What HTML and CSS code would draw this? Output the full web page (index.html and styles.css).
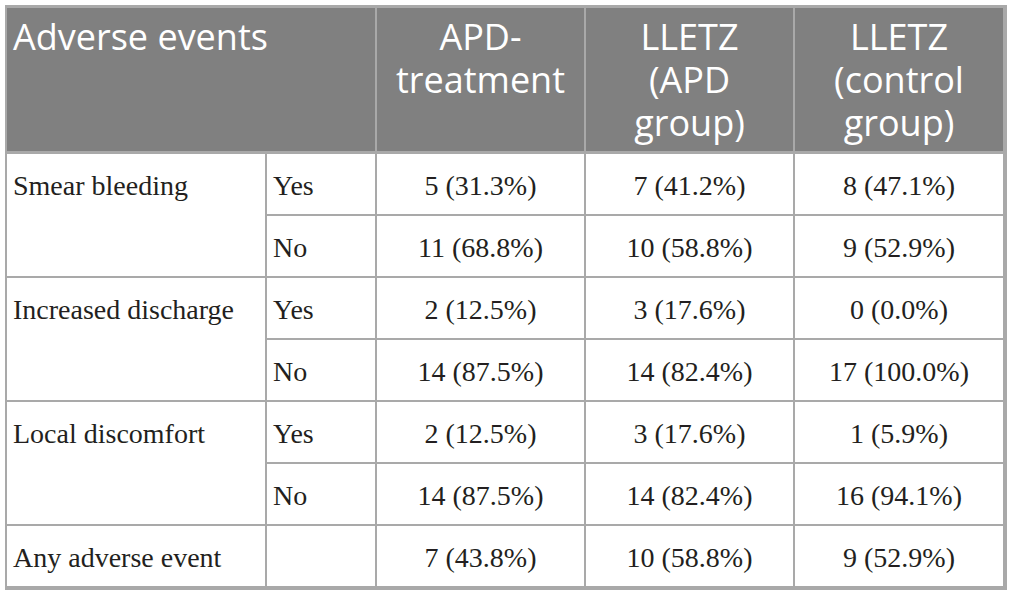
FILE: index.html
```html
<!DOCTYPE html>
<html lang="en">
<head>
<meta charset="utf-8">
<title>Adverse events</title>
<link rel="stylesheet" href="styles.css">
</head>
<body>
<div class="page">
<table class="events">
  <colgroup>
    <col class="c-label">
    <col class="c-answer">
    <col class="c-num">
    <col class="c-num">
    <col class="c-num-last">
  </colgroup>
  <thead>
    <tr>
      <th colspan="2" class="h-left">Adverse events</th>
      <th>APD-<br>treatment</th>
      <th>LLETZ<br>(APD<br>group)</th>
      <th class="last">LLETZ<br>(control<br>group)</th>
    </tr>
  </thead>
  <tbody>
    <tr>
      <td rowspan="2" class="label">Smear bleeding</td>
      <td class="ans">Yes</td>
      <td class="num">5 (31.3%)</td>
      <td class="num">7 (41.2%)</td>
      <td class="num last">8 (47.1%)</td>
    </tr>
    <tr>
      <td class="ans">No</td>
      <td class="num">11 (68.8%)</td>
      <td class="num">10 (58.8%)</td>
      <td class="num last">9 (52.9%)</td>
    </tr>
    <tr>
      <td rowspan="2" class="label">Increased discharge</td>
      <td class="ans">Yes</td>
      <td class="num">2 (12.5%)</td>
      <td class="num">3 (17.6%)</td>
      <td class="num last">0 (0.0%)</td>
    </tr>
    <tr>
      <td class="ans">No</td>
      <td class="num">14 (87.5%)</td>
      <td class="num">14 (82.4%)</td>
      <td class="num last">17 (100.0%)</td>
    </tr>
    <tr>
      <td rowspan="2" class="label">Local discomfort</td>
      <td class="ans">Yes</td>
      <td class="num">2 (12.5%)</td>
      <td class="num">3 (17.6%)</td>
      <td class="num last">1 (5.9%)</td>
    </tr>
    <tr>
      <td class="ans">No</td>
      <td class="num">14 (87.5%)</td>
      <td class="num">14 (82.4%)</td>
      <td class="num last">16 (94.1%)</td>
    </tr>
    <tr class="final">
      <td class="label">Any adverse event</td>
      <td class="ans"></td>
      <td class="num">7 (43.8%)</td>
      <td class="num">10 (58.8%)</td>
      <td class="num last">9 (52.9%)</td>
    </tr>
  </tbody>
</table>
</div>
</body>
</html>
```
FILE: styles.css
```css
html, body {
  margin: 0;
  padding: 0;
  background: #ffffff;
}

.page {
  padding: 5px 0 0 5px;
}

.events {
  border-collapse: separate;
  border-spacing: 0;
  table-layout: fixed;
  width: 1002px;
  border-left: 2px solid #a9a9a9;
  border-top: 3px solid #a9a9a9;
  border-right: 4px solid #a9a9a9;
  border-bottom: 4px solid #a9a9a9;
}

.c-label { width: 260px; }
.c-answer { width: 110px; }
.c-num { width: 209px; }
.c-num-last { width: 208px; }

.events th {
  background: #808080;
  color: #ffffff;
  font-family: "Open Sans", "Noto Sans", sans-serif;
  font-weight: 400;
  font-size: 36px;
  line-height: 43px;
  height: 129px;
  padding: 7px 6px 7px 6px;
  text-align: center;
  vertical-align: top;
  border-right: 2px solid #a9a9a9;
  border-bottom: 3px solid #a9a9a9;
}

.events th.h-left {
  text-align: left;
}

.events th.last {
  border-right: none;
}

.events td {
  font-family: "Liberation Serif", "Times New Roman", serif;
  font-size: 28px;
  line-height: 32px;
  color: #231f20;
  height: 32px;
  padding: 16px 6px 12px 6px;
  vertical-align: top;
  border-right: 2px solid #a9a9a9;
  border-bottom: 2px solid #a9a9a9;
  white-space: nowrap;
}

.events td.num {
  text-align: center;
}

.events td.last {
  border-right: none;
}

.events tr.final td {
  border-bottom: none;
}
```
